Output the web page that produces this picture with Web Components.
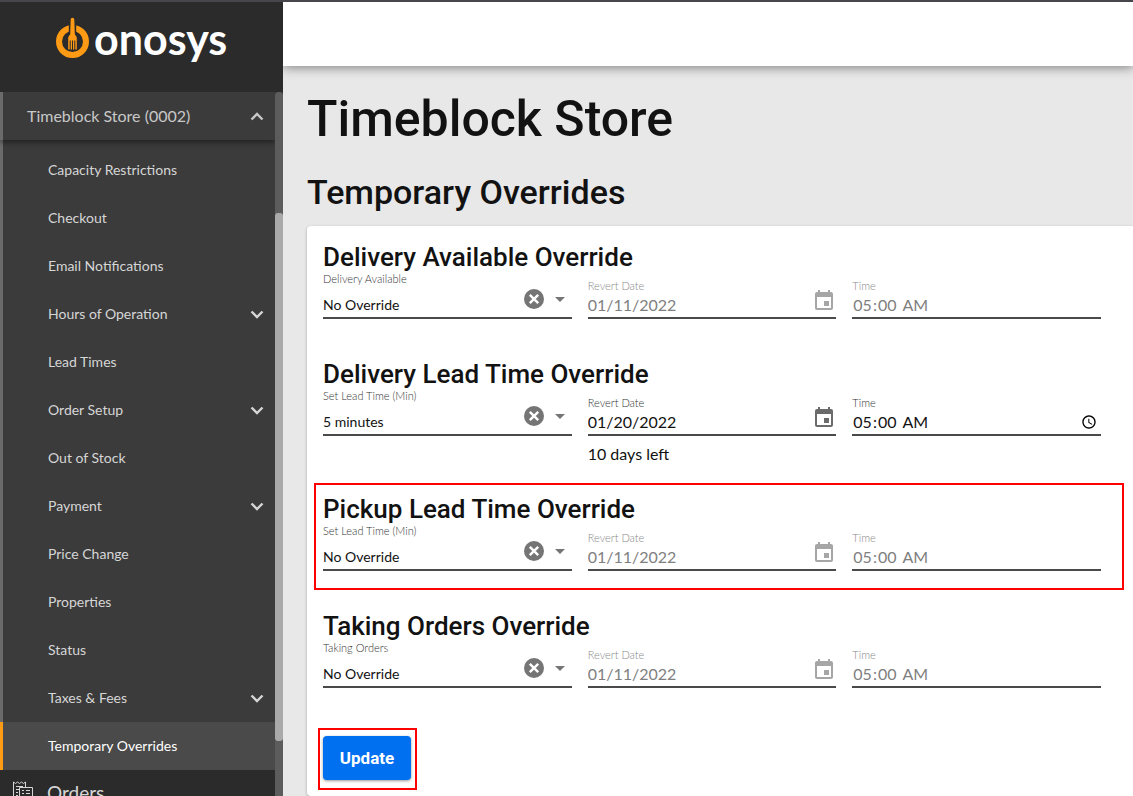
<!DOCTYPE html>
<html lang="en">
<head>
<meta charset="utf-8">
<meta name="viewport" content="width=device-width, initial-scale=1">
<title>Onosys - Temporary Overrides</title>
<style>
  html, body { margin: 0; height: 100%; }
  body { font-family: Lato, "Liberation Sans", sans-serif; color: #121212; background: #e8e8e8; }
</style>
</head>
<body>
<app-shell>
  <brand-logo slot="brand"></brand-logo>
  <side-nav slot="nav"></side-nav>
  <overrides-page></overrides-page>
</app-shell>

<script>
class BaseElement extends HTMLElement {
  connectedCallback() {
    if (this.shadowRoot) return;
    this.attachShadow({ mode: "open" }).innerHTML = this.render();
  }
}

const chevron = (up) => `
  <svg width="14" height="9" viewBox="0 0 14 9" fill="none" stroke="currentColor" stroke-width="2.4" aria-hidden="true">
    <path d="${up ? "M1.500 7.500 7 2 12.500 7.500" : "M1.500 1.500 7 7 12.500 1.500"}"/>
  </svg>`;

customElements.define("app-shell", class extends BaseElement {
  render() {
    return `
      <style>
        :host { display: grid; grid-template-columns: 283px minmax(0, 1fr); height: 100vh; box-sizing: border-box;
                border-top: 2px solid #46464d; overflow: hidden; }
        aside { display: flex; flex-direction: column; min-height: 0; background: #2b2b2b; }
        .right { display: flex; flex-direction: column; min-width: 0; min-height: 0; }
        header { flex: none; height: 64px; background: #fff; box-shadow: 0 2px 10px rgba(0,0,0,.42); clip-path: inset(0 0 -16px 0); position: relative; }
        main { flex: 1; min-height: 0; overflow: auto; scrollbar-width: none; }
      </style>
      <aside><slot name="brand"></slot><slot name="nav"></slot></aside>
      <div class="right"><header></header><main><slot></slot></main></div>`;
  }
});

customElements.define("brand-logo", class extends BaseElement {
  render() {
    return `
      <style>
        :host { display: block; flex: none; height: 90px; box-sizing: border-box; padding: 15px 48px 0 56px; }
        a { display: flex; align-items: flex-start; gap: 5px; color: #fff; text-decoration: none; }
        svg { flex: none; }
        span { font: 700 43px/44px Lato, sans-serif; }
      </style>
      <a href="#">
        <svg width="33" height="44" viewBox="0 0 33 44" aria-hidden="true">
          <circle cx="16.500" cy="24.500" r="13.500" fill="none" stroke="#fe9a14" stroke-width="6"/>
          <path d="M12.800 0h7.400v18h-7.400z" fill="#2b2b2b"/>
          <path d="M14.700 2.600a1.800 1.800 0 0 1 3.600 0L18.800 17c.2 1.500 2 1.900 2 4v11.500h-1.500V23.500h-1v9h-1.300v-9h-1v9h-1.300v-9h-1v9h-1.500V21c0-2.100 1.800-2.500 2-4z" fill="#fe9a14"/>
        </svg>
        <span>onosys</span>
      </a>`;
  }
});

customElements.define("side-nav", class extends BaseElement {
  render() {
    const items = [["Capacity Restrictions"], ["Checkout"], ["Email Notifications"], ["Hours of Operation", 1],
      ["Lead Times"], ["Order Setup", 1], ["Out of Stock"], ["Payment", 1], ["Price Change"], ["Properties"],
      ["Status"], ["Taxes & Fees", 1], ["Temporary Overrides", 0, 1]];
    return `
      <style>
        :host { display: flex; flex: 1; min-height: 0; color: #d6d6d6; }
        nav { flex: 1; min-width: 0; overflow: hidden; }
        .group { background: #3b3b3b; }
        .store { display: flex; align-items: center; justify-content: space-between; width: 100%; height: 48px; box-sizing: border-box;
                 padding: 0 11px 0 24px; border: 0; border-left: 3px solid #6b6b6b; background: #3b3b3b; color: #c8c8c8;
                 font: 400 16px/20px Lato, sans-serif; position: relative; box-shadow: 0 2px 6px rgba(0,0,0,.5); }
        ul { list-style: none; margin: 0; padding: 6px 0 0; border-left: 3px solid #6b6b6b; }
        li { height: 48px; }
        li a { display: flex; align-items: center; justify-content: space-between; height: 48px; padding: 0 11px 0 45px;
               color: inherit; text-decoration: none; font: 400 14px/20px Lato, sans-serif; }
        li.on { margin-left: -3px; }
        li.on a { border-left: 3px solid #fe9a14; background: #4a4a4a; color: #fff; }
        .orders { display: flex; align-items: center; gap: 14px; height: 46px; padding: 0 12px; color: #d6d6d6; text-decoration: none;
                  font: 400 19px/24px Lato, sans-serif; }
        .track { flex: none; width: 8px; background: #5c5c5c; border-radius: 3px 3px 0 0; }
        .thumb { height: 75%; background: #a9a9a9; border-radius: 3px; }
        .before { height: 17.2%; }
      </style>
      <nav>
        <div class="group">
          <button class="store" type="button" aria-expanded="true">Timeblock Store (0002)${chevron(true)}</button>
          <ul>${items.map(([t, sub, on]) => `<li class="${on ? "on" : ""}"><a href="#">${t.replace("&", "&amp;")}${sub ? chevron(false) : ""}</a></li>`).join("")}</ul>
        </div>
        <a class="orders" href="#">
          <svg width="21" height="24" viewBox="0 0 21 24" fill="none" stroke="currentColor" aria-hidden="true">
            <path d="M7.500 23.500h-6V1l2 1.500L5.500 1l2 1.500L9.500 1l2 1.500L13.500 1v5.500M4 5.500h7M4 8.500h3M4 11.500h2M4 14.500h2M7.500 6.500h13v17h-13zM10 9.500h2M14 9.500h4M10 12.500h2M14 12.500h4M10 15.500h8M10 18.500h8"/>
          </svg>
          Orders
        </a>
      </nav>
      <div class="track" aria-hidden="true"><div class="before"></div><div class="thumb"></div></div>`;
  }
});

const fieldStyle = `
  :host { display: block; min-width: 0; color: #121212; }
  .box { display: grid; grid-template-columns: minmax(0, 1fr) auto; height: 45px; border-bottom: 2px solid #4a4a4a; }
  label { grid-area: 1 / 1; align-self: start; font: 300 11px/14px Lato, sans-serif; color: #333; }
  select, input { grid-area: 1 / 1 / 2 / 3; align-self: end; width: 100%; height: 24px; margin: 0; padding: 0; border: 0; outline: 0;
                  background: none; color: inherit; appearance: none; font: 400 16px/24px Lato, sans-serif; opacity: 1; }
  select { font-size: 14px; }
  .icons { grid-area: 1 / 2; align-self: end; display: flex; align-items: center; position: relative; }
  button { display: block; padding: 0; border: 0; background: none; color: #757575; }
  svg { display: block; }`;

customElements.define("select-field", class extends BaseElement {
  render() {
    return `
      <style>${fieldStyle}
        .icons { gap: 11px; margin: 0 7px 8px 0; color: #757575; }
      </style>
      <div class="box">
        <label for="c">${this.getAttribute("label")}</label>
        <select id="c"><option>${this.getAttribute("value")}</option></select>
        <div class="icons">
          <button type="button" aria-label="Clear">
            <svg width="20" height="20" viewBox="0 0 20 20"><circle cx="10" cy="10" r="10" fill="currentColor"/><path d="M5.800 5.800l8.400 8.400M14.200 5.800l-8.400 8.400" stroke="#fff" stroke-width="2.400"/></svg>
          </button>
          <svg width="10" height="5" viewBox="0 0 10 5" aria-hidden="true"><path d="M0 0h10L5 5z" fill="currentColor"/></svg>
        </div>
      </div>`;
  }
});

customElements.define("date-field", class extends BaseElement {
  render() {
    const off = this.hasAttribute("disabled");
    return `
      <style>${fieldStyle}
        label { margin-top: 7px; ${off ? "color: #888;" : ""} }
        input { color: ${off ? "#808080" : "#121212"}; }
        .icons { margin-bottom: 4px; }
        button { color: ${off ? "#a6a6a6" : "#6b6b6b"}; }
        .hint { min-height: 10px; font: 400 16px/20px Lato, sans-serif; }
        ::slotted(*) { display: block; padding-top: 8px; }
      </style>
      <div class="box">
        <label for="c">Revert Date</label>
        <input id="c" type="text" value="${this.getAttribute("value")}" ${off ? "disabled" : ""}>
        <div class="icons">
          <button type="button" aria-label="Open calendar" ${off ? "disabled" : ""}>
            <svg width="24" height="24" viewBox="0 0 24 24" fill="currentColor"><path d="M17 12h-5v5h5v-5zM16 1v2H8V1H6v2H5c-1.110 0-1.990.9-1.990 2L3 19c0 1.100.89 2 2 2h14c1.100 0 2-.9 2-2V5c0-1.100-.9-2-2-2h-1V1h-2zm3 18H5V8h14v11z"/></svg>
          </button>
        </div>
      </div>
      <div class="hint"><slot></slot></div>`;
  }
});

customElements.define("time-field", class extends BaseElement {
  render() {
    const off = this.hasAttribute("disabled");
    return `
      <style>${fieldStyle}
        label { margin-top: 7px; ${off ? "color: #888;" : ""} }
        input { color: ${off ? "#808080" : "#121212"}; }
      </style>
      <div class="box">
        <label for="c">Time</label>
        <input id="c" type="time" value="05:00" ${off ? "disabled" : ""}>
      </div>`;
  }
});

customElements.define("override-section", class extends BaseElement {
  render() {
    return `
      <style>
        :host { display: block; position: relative; padding-bottom: 28px; }
        h3 { margin: 0; padding-top: 2px; font: 500 26px/30px Roboto, sans-serif; }
        .row { display: grid; grid-template-columns: repeat(3, minmax(0, 1fr)); column-gap: 16px; }
        :host([marked])::after { content: ""; position: absolute; inset: -9px -23px 19px -9px; border: 2px solid #f00; pointer-events: none; }
      </style>
      <h3>${this.getAttribute("heading")}</h3>
      <div class="row"><slot></slot></div>`;
  }
});

customElements.define("action-button", class extends BaseElement {
  render() {
    return `
      <style>
        :host { display: block; position: relative; width: fit-content; }
        button { display: block; min-width: 88px; height: 44px; padding: 0 16px; border: 0; border-radius: 4px; background: #0070f0; color: #fff;
                 font: 700 17px/20px Roboto, sans-serif; box-shadow: 0 1px 3px rgba(0,0,0,.4); }
        :host([marked])::after { content: ""; position: absolute; inset: -8px -6px -10px -5px; border: 2px solid #f00; pointer-events: none; }
      </style>
      <button type="button"><slot></slot></button>`;
  }
});

customElements.define("overrides-page", class extends BaseElement {
  render() {
    return `
      <style>
        :host { display: block; padding: 25px 0 0 24px; }
        h1 { margin: 0; font: 500 50px/56px Roboto, sans-serif; }
        h2 { margin: 25px 0 14px; font: 500 34px/40px Roboto, sans-serif; }
        form { margin: 0; padding: 14px 32px 16px 16px; background: #fff; border-radius: 4px 0 0 4px; box-shadow: 0 1px 3px rgba(0,0,0,.3); }
        action-button { margin-top: 10px; }
      </style>
      <h1>Timeblock Store</h1>
      <h2>Temporary Overrides</h2>
      <form>
        <override-section heading="Delivery Available Override">
          <select-field label="Delivery Available" value="No Override"></select-field>
          <date-field value="01/11/2022" disabled></date-field>
          <time-field disabled></time-field>
        </override-section>
        <override-section heading="Delivery Lead Time Override">
          <select-field label="Set Lead Time (Min)" value="5 minutes"></select-field>
          <date-field value="01/20/2022"><span>10 days left</span></date-field>
          <time-field></time-field>
        </override-section>
        <override-section heading="Pickup Lead Time Override" marked>
          <select-field label="Set Lead Time (Min)" value="No Override"></select-field>
          <date-field value="01/11/2022" disabled></date-field>
          <time-field disabled></time-field>
        </override-section>
        <override-section heading="Taking Orders Override">
          <select-field label="Taking Orders" value="No Override"></select-field>
          <date-field value="01/11/2022" disabled></date-field>
          <time-field disabled></time-field>
        </override-section>
        <action-button marked>Update</action-button>
      </form>`;
  }
});
</script>
</body>
</html>
